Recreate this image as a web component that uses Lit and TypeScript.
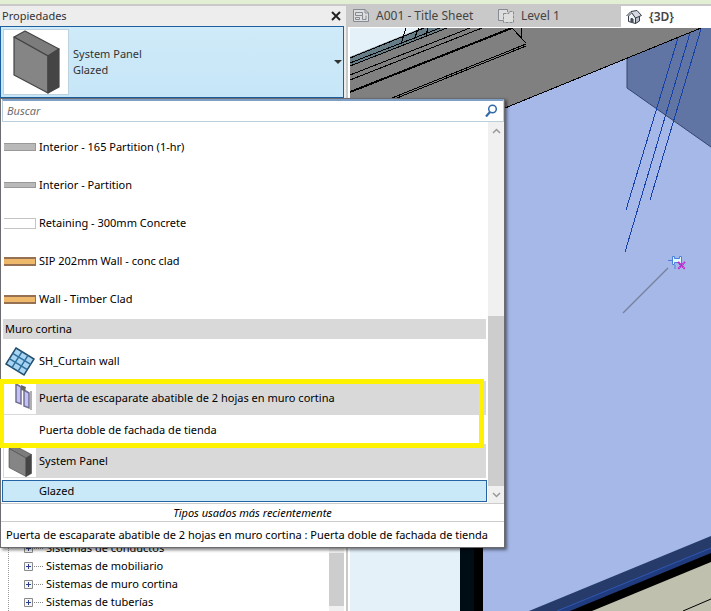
import { LitElement, html, css, svg } from "lit";
import { customElement, state } from "lit/decorators.js";

const panelIcon = (cls: string) => html`<svg class=${cls} viewBox="0 0 64 64" aria-hidden="true">
  <g stroke="#444" stroke-width="1.2" stroke-linejoin="round">
    <path d="M10 7 L21 1 L55 19 L44 26 Z" fill="#7c7c7c" />
    <path d="M10 7 L44 26 L44 63 L10 45 Z" fill="#858585" />
    <path d="M44 26 L55 19 L55 57 L44 63 Z" fill="#454545" />
  </g>
</svg>`;

const doorIcon = html`<svg class="thumb" viewBox="0 0 32 32" aria-hidden="true">
  <path d="M12 2 L17 5 L17 22 L12 20 Z" fill="#c3c2f6" stroke="#716f92" stroke-width="1.500" />
  <path d="M20 8 L25 11 L25 26 L20 24 Z" fill="#c3c2f6" stroke="#716f92" stroke-width="1.500" />
  <path d="M17 3 L22 5 L21 9 L17 8 Z" fill="#666" />
  <path d="M27 9 V28" stroke="#b0b0b0" stroke-width="2" />
</svg>`;

const gridIcon = html`<svg class="thumb" viewBox="0 0 32 32" aria-hidden="true">
  <path d="M12 3 L30 14 L20 30 L2 19 Z" fill="#a9d5f3" stroke="#24506e" stroke-width="1.5" />
  <path d="M18 6.700 L8 22.700 M24 10.300 L14 26.300 M8.700 8.300 L26.700 19.300 M5.300 13.700 L23.300 24.700"
    stroke="#2f6f9c" stroke-width="1.500" fill="none" />
</svg>`;

interface WallType { name: string; kind: string; }
const WALLS: WallType[] = [
  { name: "Interior - 165 Partition (1-hr)", kind: "grey" },
  { name: "Interior - Partition", kind: "grey thin" },
  { name: "Retaining - 300mm Concrete", kind: "hollow" },
  { name: "SIP 202mm Wall - conc clad", kind: "timber" },
  { name: "Wall - Timber Clad", kind: "timber" },
];

@customElement("type-menu")
export class TypeMenu extends LitElement {
  @state() private query = "";

  static styles = css`
    :host { display: flex; flex-direction: column; box-sizing: border-box; background: #fff;
      border: 1px solid #6b6b70; box-shadow: 2px 2px 3px rgba(0, 0, 0, 0.5); color: #000; }
    button { font: inherit; color: inherit; background: none; border: 0; padding: 0; margin: 0; text-align: left; }
    .search { display: flex; align-items: center; height: 23px; box-sizing: border-box; margin-left: 1px;
      border: 1px solid #b9cfdc; border-top: 2px solid #7e9fc6; padding: 0 5px 0 4px; }
    .search input { flex: 1; min-width: 0; border: 0; outline: 0; padding: 0; font: inherit; background: none; }
    .search input::placeholder { color: #6e6e6e; font-style: italic; opacity: 1; }
    .search svg { width: 14px; height: 14px; }
    .body { display: flex; border-bottom: 1px solid #ccc; }
    .list { flex: 1; min-width: 0; display: flex; flex-direction: column; padding: 6px 1px 1px 1px; }
    .row { display: flex; align-items: center; height: 38px; padding-left: 2px; gap: 3px; }
    .swatch { width: 32px; height: 8px; box-sizing: border-box; }
    .grey { background: #b9b9b9; border: 1px solid #999; border-left: 0; }
    .thin { height: 6px; }
    .hollow { height: 11px; border: 1px solid #c4c4c4; border-left: 0; }
    .timber { height: 9px; background: #eeb96b; border: 2px solid #967052; border-left: 0; border-right-width: 1px; }
    .thumb { width: 32px; height: 32px; background: #fff; flex: none; }
    .group { margin: 1px 1px 3px 1px; height: 20px; line-height: 20px; padding-left: 2px; background: #d9d9d9;
      font-size: inherit; font-weight: 400; }
    .family { display: flex; align-items: center; gap: 3px; height: 34px; margin: 0 1px; padding-left: 1px;
      background: #d9d9d9; }
    .type { display: block; height: 29px; padding-left: 37px; }
    .marked { position: relative; margin-top: 1px; display: flex; flex-direction: column; }
    .mark { position: absolute; inset: -2px 3px -4px -2px; border: 5px solid #fff200; border-left-width: 4px;
      pointer-events: none; z-index: 1; }
    .selected { height: 22px; margin-top: 2px; padding-left: 36px; border: 1px solid #2464a4; background: #c9e8f8; }
    .scroll { width: 16px; display: flex; flex-direction: column; background: #f0f0f0; }
    .scroll svg { width: 16px; height: 17px; display: block; }
    .gap { flex: 176; }
    .thumbbar { flex: 170; background: #cdcdcd; }
    .recent { height: 17px; line-height: 17px; text-align: center; font-style: italic; border-bottom: 1px solid #ccc; }
    .last { height: 25px; padding: 0 5px; white-space: nowrap; overflow: hidden; }
  `;

  render() {
    return html`
      <label class="search">
        <input type="text" placeholder="Buscar" aria-label="Buscar" .value=${this.query}
          @input=${(e: Event) => (this.query = (e.target as HTMLInputElement).value)} />
        <svg viewBox="0 0 14 14" fill="none" stroke="#3568a8" aria-hidden="true">
          <circle cx="8.500" cy="5" r="3.800" stroke-width="1.500" /><path d="M6 8 L2 12.500" stroke-width="2.200" />
        </svg>
      </label>
      <div class="body">
        <div class="list">
          ${WALLS.map((w) => html`<button class="row"><span class="swatch ${w.kind}"></span>${w.name}</button>`)}
          <h2 class="group">Muro cortina</h2>
          <button class="row">${gridIcon}SH_Curtain wall</button>
          <div class="marked">
            <div class="family">${doorIcon}Puerta de escaparate abatible de 2 hojas en muro cortina</div>
            <button class="type">Puerta doble de fachada de tienda</button>
            <span class="mark"></span>
          </div>
          <div class="family">${panelIcon("thumb")}System Panel</div>
          <button class="selected">Glazed</button>
        </div>
        <div class="scroll">
          <svg viewBox="0 0 16 17"><path d="M5 11 L8.500 7.500 L12 11" fill="none" stroke="#999" stroke-width="1.500" /></svg>
          <span class="gap"></span>
          <span class="thumbbar"></span>
          <svg viewBox="0 0 16 17"><path d="M5 7 L8.500 10.500 L12 7" fill="none" stroke="#999" stroke-width="1.500" /></svg>
        </div>
      </div>
      <div class="recent">Tipos usados más recientemente</div>
      <button class="last">Puerta de escaparate abatible de 2 hojas en muro cortina : Puerta doble de fachada de tienda</button>
    `;
  }
}

@customElement("model-view")
export class ModelView extends LitElement {
  static styles = css`
    :host { display: block; min-height: 0; overflow: hidden; }
    svg { display: block; width: 100%; height: 100%; }
  `;
  render() {
    const thin = ["350 63 440 28", "350 66 447 28", "350 75 470 28", "350 80 482 28", "392 98 526 44", "397 98 526 46",
      "512 28 526 43", "521 28 521 38", "505 108 701 28"];
    return html`<svg viewBox="350 28 361 583" preserveAspectRatio="xMinYMax slice" role="img" aria-label="3D">
      <rect x="350" y="28" width="361" height="583" fill="#e4f1f9" />
      <path d="M460 28 H711 V611 H460 Z" fill="#a5b8e7" />
      <path d="M460 500 H474 V611 H460 Z" fill="#000d15" />
      <path d="M474 500 H483 V611 H474 Z" fill="#000" />
      <path d="M350 57 L422 28 H701 L505 108 L460 126 H350 Z" fill="#808080" />
      <path d="M350 57 L422 28 H447 L350 66 Z" fill="#667d87" />
      <path d="M701 28 H711 V147 L627 88 V58 Z" fill="#6075a4" />
      <path d="M627 58 V88 L711 147" fill="none" stroke="#34456f" />
      <g fill="none" stroke="#000" shape-rendering="crispEdges">
        ${thin.map((t) => svg`<path d=${"M" + t} />`)}
        <path d="M350 58 L424 28" />
        <path d="M350 92 L512 28" stroke-width="2" />
        <path d="M406 28 L401 44 M419 28 L414 39 M428 28 L426 35" />
      </g>
      <g stroke="#1440ac" shape-rendering="crispEdges">
        <path d="M678 38 L626 210" /><path d="M690 33 L625 252" /><path d="M701 29 L650 200" />
      </g>
      <path d="M668 268 L623 313" stroke="#78829c" stroke-width="1.500" />
      <g>
        <path d="M668 260.500 H672" stroke="#4a80dc" />
        <path d="M672.500 256.500 H674.500 V258.500 H679.500 V256.500 H681.500 V264.500 H679.500 V262.500 H674.500 V264.500 H672.500 Z"
          fill="#dffaff" stroke="#4a80dc" />
        <path d="M678 262 L685 269 M685 262 L678 269" stroke="#c020c8" stroke-width="2" stroke-dasharray="1.500 .5" />
        <path d="M675 265 V269" stroke="#4a80dc" />
      </g>
      <path d="M529 611 L711 536 V611 Z" fill="#263b69" />
      <path d="M557 611 L711 548 V611 Z" fill="#203b7e" />
      <path d="M557 611 L711 548" stroke="#3058b4" />
      <path d="M570 611 L711 553 V611 Z" fill="#000" />
      <path d="M592 611 L711 562 V611 Z" fill="#bfc1ae" />
      <path d="M683 611 L711 599" stroke="#000" />
    </svg>`;
  }
}

@customElement("app-root")
export class AppRoot extends LitElement {
  static styles = css`
    :host { display: flex; flex-direction: column; height: 100vh; overflow: hidden; background: #c9c9c9;
      border-top: 4px solid #e3efd5; box-sizing: border-box; font: 11px/16px "Noto Sans", "Open Sans", sans-serif; color: #1e1e1e; }
    button { font: inherit; color: inherit; background: none; border: 0; padding: 0; margin: 0; text-align: left; }
    main { flex: 1; min-height: 0; display: grid; grid-template-columns: 346px minmax(0, 1fr); }
    .palette { display: flex; flex-direction: column; min-height: 0; background: #fff; border-top: 2px solid #c9c9c9; }
    .title { display: flex; align-items: center; justify-content: space-between; height: 20px; padding: 0 4px 0 2px;
      background: #ededed; }
    h1 { margin: 0; font-size: 11px; font-weight: 400; color: #333; }
    .close, .close svg { display: block; width: 12px; height: 12px; }
    .picker { position: relative; z-index: 2; padding-right: 2px; background: #ededed; }
    .current { display: flex; align-items: center; gap: 4px; width: 100%; height: 72px; box-sizing: border-box;
      border: 1px solid #1e5f9f; background: linear-gradient(#cfeaf9, #c6e6f7); padding: 0 1px 0 2px; color: #333; }
    .preview { box-sizing: border-box; width: 66px; height: 66px; background: #fff; border: 1px solid #bcd3df; }
    .names { flex: 1; }
    .arrow { border: 4px solid transparent; border-top-color: #333; border-bottom: 0; }
    type-menu { position: absolute; top: 100%; left: 0; width: 505px; }
    .lower { flex: 1; min-height: 0; overflow: hidden; display: flex; }
    .tree { flex: 1; display: flex; flex-direction: column; justify-content: flex-end; margin: 0 0 0 8px; padding: 0;
      list-style: none; color: #000; border-left: 1px dotted #999; }
    .tree li { display: flex; align-items: center; height: 18px; padding-left: 15px; }
    .plus { width: 9px; height: 9px; flex: none; }
    .plus svg { display: block; width: 9px; height: 9px; }
    .dots { width: 9px; margin: 0 3px 0 1px; border-top: 1px dotted #888; }
    .bar { width: 15px; margin-right: 2px; background: #f0f0f0; display: flex; flex-direction: column; justify-content: flex-end; padding-bottom: 5px; }
    .bar span { height: 53px; background: #cdcdcd; }
    .work { display: flex; flex-direction: column; min-height: 0; }
    .tabs { display: grid; grid-template-columns: 145fr 130fr 90fr; height: 22px; padding-top: 1px; color: #444; font-size: 12px; }
    .tab { display: flex; align-items: center; gap: 7px; padding-left: 7px; }
    .tab svg { width: 16px; height: 16px; }
    .active { background: #fff; padding-left: 5px; font-weight: 600; margin-top: 1px; }
    model-view { flex: 1; border-top: 1px solid #fff; border-left: 2px solid #fff; margin-left: 2px; }
  `;

  render() {
    return html`<main>
      <section class="palette">
        <div class="title">
          <h1>Propiedades</h1>
          <button class="close" aria-label="Cerrar"><svg viewBox="0 0 12 12"><path d="M2 2 L10 10 M10 2 L2 10" stroke="#222" stroke-width="2" /></svg></button>
        </div>
        <div class="picker">
          <button class="current">
            ${panelIcon("preview")}
            <span class="names">System Panel<br />Glazed</span>
            <span class="arrow"></span>
          </button>
          <type-menu></type-menu>
        </div>
        <div class="lower">
          <ul class="tree">
            ${["conductos", "mobiliario", "muro cortina", "tuberías"].map((n) => html`<li>
              <button class="plus" aria-label="Expandir"><svg viewBox="0 0 9 9"><path d="M.5 .5 H8.500 V8.500 H.5 Z" fill="#f6f6f6" stroke="#8a8a8a" /><path d="M2 4.500 H7 M4.500 2 V7" stroke="#2b3f8c" /></svg></button>
              <span class="dots"></span>Sistemas de ${n}</li>`)}
          </ul>
          <div class="bar"><span></span></div>
        </div>
      </section>
      <section class="work">
        <nav class="tabs">
          <button class="tab"><svg viewBox="0 0 16 16" fill="none" stroke="#858b92"><path d="M.5 1.500 H12 L15.500 5 V13.500 H.5 Z" fill="#dedede" /><path d="M12 1.500 V5 H15.500 M2.500 4.500 H9.500 V7.500 H2.500 Z M2.500 9.500 H6.500 V11.500 H2.500 Z M9.500 7.500 V11.500 H13 V7.500" /></svg>A001 - Title Sheet</button>
          <button class="tab"><svg viewBox="0 0 16 16" fill="none" stroke="#858b92"><path d="M7.500 12.500 H.5 V1.500 H9.500 V4" fill="#dedede" /><path d="M5.500 5.500 H11 V3.500 H15.500 V14.500 H5.500 Z" fill="#dedede" stroke-dasharray="3 1" /></svg>Level 1</button>
          <button class="tab active"><svg viewBox="0 0 16 16" stroke="#333b46" stroke-linejoin="round"><path d="M2.500 7 L6 3.500 L9.500 8.500 V14.500 L2.500 12.500 Z" fill="#f2f3f6" /><path d="M9.500 8.500 L13.500 6.500 V12 L9.500 14.500 Z" fill="#b8bdc9" /><path d="M.5 7 L5 2.500 L11 1.500 L15.500 6.500 L9.500 9 L5.500 3.500" fill="#d5d8e0" /><path d="M5 13 V9.500 L7 10 V13.500" fill="#667" /></svg>{3D}</button>
        </nav>
        <model-view></model-view>
      </section>
    </main>`;
  }
}
